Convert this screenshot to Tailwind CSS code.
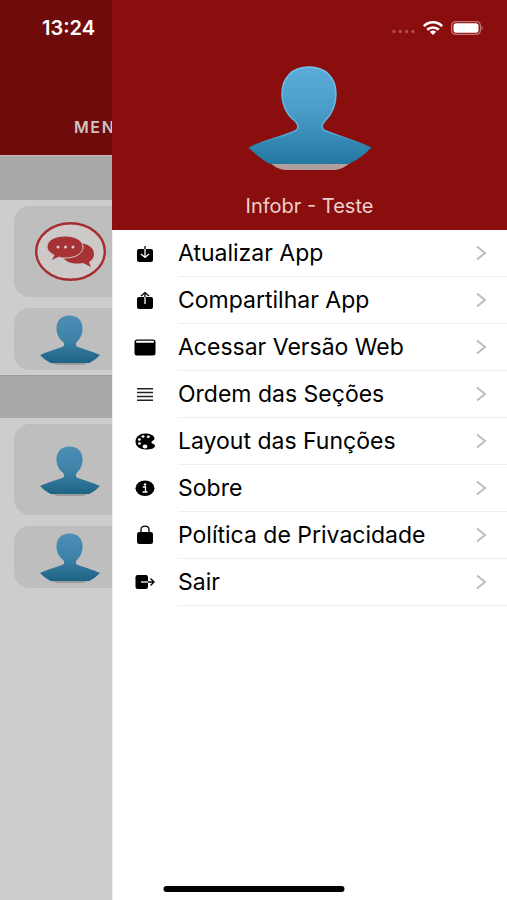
<!DOCTYPE html>
<html lang="pt-BR">
<head>
<meta charset="utf-8">
<meta name="viewport" content="width=device-width, initial-scale=1">
<title>Infobr - Teste</title>
<script src="https://cdn.jsdelivr.net/npm/@tailwindcss/browser@4"></script>
</head>
<body class="bg-white font-['Inter','Liberation_Sans',sans-serif] text-black">
<svg class="absolute h-0 w-0" aria-hidden="true">
  <defs>
    <linearGradient id="blue" x1="0" y1="0" x2="0" y2="1"><stop offset="0" stop-color="#5aabd8"/><stop offset=".45" stop-color="#4a9cc9"/><stop offset="1" stop-color="#2379a2"/></linearGradient>
    <linearGradient id="rim" x1="0" y1="0" x2="0" y2="1"><stop offset="0" stop-color="#74c3ec"/><stop offset=".8" stop-color="#58b0d8"/><stop offset="1" stop-color="#2379a2"/></linearGradient>
    <linearGradient id="base" x1="0" y1="0" x2="1" y2="0"><stop offset="0" stop-color="#bd9d9b"/><stop offset=".5" stop-color="#a5a09f"/><stop offset="1" stop-color="#bd9d9b"/></linearGradient>
    <linearGradient id="dimblue" x1="0" y1="0" x2="0" y2="1"><stop offset="0" stop-color="#4b8fb6"/><stop offset=".5" stop-color="#3e82a8"/><stop offset="1" stop-color="#1d6384"/></linearGradient>
  </defs>
  <symbol id="person" viewBox="0 0 124 104" preserveAspectRatio="none">
    <path d="M24 99h76c-4 3-8 5-13 5H37c-5 0-9-2-13-5Z" fill="#9c9c9c"/>
    <path d="M61 1C44 1 34 12 34 28c0 12 6 22 13 27 4 4 4 9 0 11C31 72 14 76 0 83c6 7 14 12 22 17h80c8-5 16-10 22-17-14-7-31-11-47-17-4-2-4-7 0-11 6-6 11-15 11-27C88 12 78 1 61 1Z"/>
  </symbol>
</svg>
<div class="flex min-h-screen overflow-hidden">
  <main class="w-28 shrink-0 overflow-hidden bg-[#cdcdcd]">
    <header class="flex h-[155px] flex-col justify-between bg-[#6f0b0b] pt-4 pb-4">
      <time class="pl-[42px] text-xl leading-6 font-semibold text-white">13:24</time>
      <h1 class="pl-[74px] text-base leading-6 font-semibold tracking-widest whitespace-nowrap text-[#cfc3c3]">MENU</h1>
    </header>
    <div class="h-[45px] border-t border-[#c5b5b5] bg-[#a9a9a9]"></div>
    <section class="flex flex-col gap-[11px] pt-1.5 pb-[5px] pl-3.5">
      <button type="button" aria-label="Mensagens" class="flex h-[91px] items-center rounded-l-2xl bg-[#bebebe] pl-[21px]">
        <svg class="h-[59px] w-[71px]" viewBox="0 0 71 59" fill="none">
          <ellipse cx="35.500" cy="29.500" rx="34.300" ry="28.300" fill="#cdc9c9" stroke="#a62d30" stroke-width="2.400"/>
          <path d="M43 21c9 0 16 4 16 11 0 4-2 6-5 8l2 5-8-4c-10 2-19-1-20-7 8-1 15-6 15-13Z" fill="#a73235"/>
          <path d="M30 14c10 0 18 4 18 11s-8 11-18 11c-2 0-4 0-6-1l-8 4 3-6c-4-2-7-5-7-8 0-7 8-11 18-11Z" fill="#a73235" stroke="#cdc9c9" stroke-width="1"/>
          <circle cx="23" cy="25" r="1.500" fill="#dfcccc"/><circle cx="30.500" cy="25" r="1.500" fill="#dfcccc"/><circle cx="38" cy="25" r="1.500" fill="#dfcccc"/>
        </svg>
      </button>
      <button type="button" aria-label="Perfil" class="flex h-[62px] items-center rounded-l-2xl bg-[#bebebe] pt-0.5 pl-[26px]">
        <svg class="h-[50px] w-[60px]" fill="url(#dimblue)"><use href="#person"/></svg>
      </button>
    </section>
    <div class="h-[43px] border-t border-[#9c9c9c] bg-[#a9a9a9]"></div>
    <section class="flex flex-col gap-[11px] pt-1.5 pl-3.5">
      <button type="button" aria-label="Contatos" class="flex h-[91px] items-center rounded-l-2xl bg-[#bebebe] pt-0.5 pl-[26px]">
        <svg class="h-[50px] w-[60px]" fill="url(#dimblue)"><use href="#person"/></svg>
      </button>
      <button type="button" aria-label="Conta" class="flex h-[62px] items-center rounded-l-2xl bg-[#bebebe] pt-0.5 pl-[26px]">
        <svg class="h-[50px] w-[60px]" fill="url(#dimblue)"><use href="#person"/></svg>
      </button>
    </section>
  </main>

  <aside class="flex min-w-0 flex-1 flex-col border-l border-[#eeeeee] bg-white">
    <header class="-ml-px flex h-[230px] flex-col items-center bg-[#8a0e0e] pt-4">
      <div class="flex h-6 w-full items-center justify-end gap-2 pr-6">
        <svg class="h-6 w-[23px]" viewBox="0 0 23 24" fill="#b04c49"><circle cx="2" cy="15.500" r="1.700"/><circle cx="8.300" cy="15.500" r="1.700"/><circle cx="14.600" cy="15.500" r="1.700"/><circle cx="20.900" cy="15.500" r="1.700"/></svg>
        <svg class="h-3.5 w-5" viewBox="0 0 20 14" fill="none" stroke="#fff" stroke-width="2.600"><path d="M.8 5.200c5-5.200 13.400-5.200 18.400 0M4.200 8.800c3.200-3.100 8.400-3.100 11.600 0"/><path d="M6.800 10.800c1.800-1.600 4.600-1.600 6.400 0L10 14Z" fill="#fff" stroke="none"/></svg>
        <svg class="h-3.5 w-8" viewBox="0 0 32 14"><rect x=".6" y=".6" width="28.800" height="12.800" rx="4" fill="none" stroke="#c17776" stroke-width="1.200"/><rect x="2.500" y="2.300" width="25" height="9.400" rx="2.500" fill="#fff"/><path d="M30.500 5c1.700.5 1.700 3.500 0 4Z" fill="#c17776"/></svg>
      </div>
      <svg class="mt-[26px] h-[104px] w-[124px]" viewBox="0 0 124 104" role="img" aria-label="Foto do perfil">
        <path d="M22 97h80c-5 4-10 7-16 7H38c-6 0-11-3-16-7Z" fill="url(#base)"/>
        <path d="M61 1C44 1 34 12 34 28c0 12 6 22 13 27 4 4 4 8 0 10C31 72 14 75 1 82c7 7 14 12 21 16h79c8-4 15-9 22-16-14-7-30-11-45-17-5-2-5-6-1-10 6-6 11-15 11-27C88 12 78 1 61 1Z" fill="url(#blue)"/>
        <path d="M1 82C14 75 31 72 47 65c4-2 4-6 0-10C40 50 34 40 34 28 34 12 44 1 61 1s27 11 27 27c0 12-5 21-11 27-4 4-4 8 1 10 15 6 31 10 45 17" fill="none" stroke="url(#rim)" stroke-width="1.500"/>
      </svg>
      <h2 class="mt-6 text-xl leading-6 text-[#ecd0cf]">Infobr - Teste</h2>
    </header>
    <nav aria-label="Menu">
      <ul>
        <li><a href="#" class="flex h-[47px] items-center pl-[21px]">
          <svg class="mr-[22px] h-[22px] w-[22px]" viewBox="0 0 22 22" fill="none"><rect x="3" y="6" width="16" height="13" rx="2" fill="#000"/><path d="M11 3v3" stroke="#000" stroke-width="1.300"/><path d="M11 6v8M7 11l4 3.500 4-3.500" stroke="#fff" stroke-width="1.300"/></svg>
          <span class="flex h-full flex-1 items-center justify-between border-b border-[#eeeeee] pr-5 text-[23px] leading-7">Atualizar App<svg class="h-4 w-3" viewBox="0 0 12 16" fill="none" stroke="#bdbdbd" stroke-width="2"><path d="m2 1.500 8 6.500-8 6.500"/></svg></span></a></li>
        <li><a href="#" class="flex h-[47px] items-center pl-[21px]">
          <svg class="mr-[22px] h-[22px] w-[22px]" viewBox="0 0 22 22" fill="none"><rect x="3" y="7" width="16" height="12" rx="2" fill="#000"/><path d="M11 7v7" stroke="#fff" stroke-width="1.300"/><path d="M11 3v4M7 6l4-3.500L15 6" stroke="#000" stroke-width="1.300"/></svg>
          <span class="flex h-full flex-1 items-center justify-between border-b border-[#eeeeee] pr-5 text-[23px] leading-7">Compartilhar App<svg class="h-4 w-3" viewBox="0 0 12 16" fill="none" stroke="#bdbdbd" stroke-width="2"><path d="m2 1.500 8 6.500-8 6.500"/></svg></span></a></li>
        <li><a href="#" class="flex h-[47px] items-center pl-[21px]">
          <svg class="mr-[22px] h-[22px] w-[22px]" viewBox="0 0 22 22"><rect x=".5" y="2.500" width="21" height="16" rx="2.500"/><rect x="2" y="3.800" width="18" height="2" rx=".8" fill="#fff"/></svg>
          <span class="flex h-full flex-1 items-center justify-between border-b border-[#eeeeee] pr-5 text-[23px] leading-7">Acessar Versão Web<svg class="h-4 w-3" viewBox="0 0 12 16" fill="none" stroke="#bdbdbd" stroke-width="2"><path d="m2 1.500 8 6.500-8 6.500"/></svg></span></a></li>
        <li><a href="#" class="flex h-[47px] items-center pl-[21px]">
          <svg class="mr-[22px] h-[22px] w-[22px]" viewBox="0 0 22 22" stroke="#222" stroke-width="1.500"><path d="M3 4.800h16M3 8.600h16M3 12.400h16M3 16.200h16"/></svg>
          <span class="flex h-full flex-1 items-center justify-between border-b border-[#eeeeee] pr-5 text-[23px] leading-7">Ordem das Seções<svg class="h-4 w-3" viewBox="0 0 12 16" fill="none" stroke="#bdbdbd" stroke-width="2"><path d="m2 1.500 8 6.500-8 6.500"/></svg></span></a></li>
        <li><a href="#" class="flex h-[47px] items-center pl-[21px]">
          <svg class="mr-[22px] h-[22px] w-[22px]" viewBox="0 0 22 22"><path d="M11 2.500c5 0 9.500 2 9.500 5 0 2-3 2-3 4s3.500 1 3.500 3c0 3-4 4-9 4C6 18.500 1.500 15.500 1.500 10.500S6 2.500 11 2.500Z"/><g fill="#fff"><ellipse cx="9" cy="5.500" rx="1.500" ry="1.200"/><ellipse cx="14.300" cy="5.800" rx="1.500" ry="1.200"/><ellipse cx="5.300" cy="8.500" rx="1.500" ry="1.200"/><ellipse cx="5.500" cy="12.500" rx="1.500" ry="1.300"/><ellipse cx="11" cy="15.500" rx="2.400" ry="1.900"/></g></svg>
          <span class="flex h-full flex-1 items-center justify-between border-b border-[#eeeeee] pr-5 text-[23px] leading-7">Layout das Funções<svg class="h-4 w-3" viewBox="0 0 12 16" fill="none" stroke="#bdbdbd" stroke-width="2"><path d="m2 1.500 8 6.500-8 6.500"/></svg></span></a></li>
        <li><a href="#" class="flex h-[47px] items-center pl-[21px]">
          <svg class="mr-[22px] h-[22px] w-[22px]" viewBox="0 0 22 22"><ellipse cx="11" cy="10.300" rx="9.500" ry="7.700"/><circle cx="11" cy="6.500" r="1.200" fill="#fff"/><path d="M8.800 9H11.500v4.700M8.500 14h5" fill="none" stroke="#fff" stroke-width="1.300"/></svg>
          <span class="flex h-full flex-1 items-center justify-between border-b border-[#eeeeee] pr-5 text-[23px] leading-7">Sobre<svg class="h-4 w-3" viewBox="0 0 12 16" fill="none" stroke="#bdbdbd" stroke-width="2"><path d="m2 1.500 8 6.500-8 6.500"/></svg></span></a></li>
        <li><a href="#" class="flex h-[47px] items-center pl-[21px]">
          <svg class="mr-[22px] h-[22px] w-[22px]" viewBox="0 0 22 22"><rect x="3" y="7" width="16" height="12" rx="2.200"/><path d="M7 8V4.500c0-4.500 8-4.500 8 0V8" fill="none" stroke="#000" stroke-width="1.300"/></svg>
          <span class="flex h-full flex-1 items-center justify-between border-b border-[#eeeeee] pr-5 text-[23px] leading-7">Política de Privacidade<svg class="h-4 w-3" viewBox="0 0 12 16" fill="none" stroke="#bdbdbd" stroke-width="2"><path d="m2 1.500 8 6.500-8 6.500"/></svg></span></a></li>
        <li><a href="#" class="flex h-[47px] items-center pl-[21px]">
          <svg class="mr-[22px] h-[22px] w-[22px]" viewBox="0 0 22 22" fill="none"><rect x="1.500" y="3" width="12.500" height="14" rx="2.200" fill="#000"/><path d="M7 10h7" stroke="#fff" stroke-width="1.300"/><path d="M14 10h6M16.500 6.500 20 10l-3.500 3.500" stroke="#000" stroke-width="1.400"/></svg>
          <span class="flex h-full flex-1 items-center justify-between border-b border-[#eeeeee] pr-5 text-[23px] leading-7">Sair<svg class="h-4 w-3" viewBox="0 0 12 16" fill="none" stroke="#bdbdbd" stroke-width="2"><path d="m2 1.500 8 6.500-8 6.500"/></svg></span></a></li>
      </ul>
    </nav>
  </aside>
</div>
<div class="fixed bottom-2 left-1/2 h-1.5 w-[181px] -translate-x-1/2 rounded-full bg-black"></div>
</body>
</html>
